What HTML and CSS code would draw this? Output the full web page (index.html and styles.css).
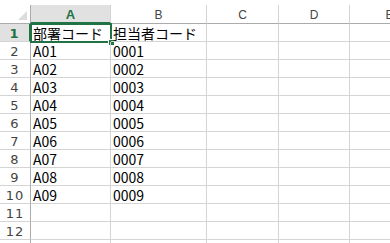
FILE: index.html
```html
<!DOCTYPE html>
<html lang="ja">
<head>
    <meta charset="UTF-8">
    <title>Sheet1</title>
    <link rel="stylesheet" href="styles.css">
</head>
<body>

<div class="sheet">
    <div class="top-strip"></div>

    <div class="hd corner">
        <svg width="9" height="9" viewBox="0 0 9 9"><polygon points="9,0 9,9 0,9" fill="#dcdcdc"/></svg>
    </div>
    <div class="hd col active">A</div>
    <div class="hd col">B</div>
    <div class="hd col">C</div>
    <div class="hd col">D</div>
    <div class="hd col">E</div>

    <div class="rh active">1</div>
    <div class="cell selected">部署コード<span class="sel-box"><span class="handle"></span></span></div>
    <div class="cell">担当者コード</div>
    <div class="cell"></div><div class="cell"></div><div class="cell"></div>

    <div class="rh">2</div><div class="cell">A01</div><div class="cell">0001</div>
    <div class="cell"></div><div class="cell"></div><div class="cell"></div>

    <div class="rh">3</div><div class="cell">A02</div><div class="cell">0002</div>
    <div class="cell"></div><div class="cell"></div><div class="cell"></div>

    <div class="rh">4</div><div class="cell">A03</div><div class="cell">0003</div>
    <div class="cell"></div><div class="cell"></div><div class="cell"></div>

    <div class="rh">5</div><div class="cell">A04</div><div class="cell">0004</div>
    <div class="cell"></div><div class="cell"></div><div class="cell"></div>

    <div class="rh">6</div><div class="cell">A05</div><div class="cell">0005</div>
    <div class="cell"></div><div class="cell"></div><div class="cell"></div>

    <div class="rh">7</div><div class="cell">A06</div><div class="cell">0006</div>
    <div class="cell"></div><div class="cell"></div><div class="cell"></div>

    <div class="rh">8</div><div class="cell">A07</div><div class="cell">0007</div>
    <div class="cell"></div><div class="cell"></div><div class="cell"></div>

    <div class="rh">9</div><div class="cell">A08</div><div class="cell">0008</div>
    <div class="cell"></div><div class="cell"></div><div class="cell"></div>

    <div class="rh">10</div><div class="cell">A09</div><div class="cell">0009</div>
    <div class="cell"></div><div class="cell"></div><div class="cell"></div>

    <div class="rh">11</div><div class="cell"></div><div class="cell"></div>
    <div class="cell"></div><div class="cell"></div><div class="cell"></div>

    <div class="rh">12</div><div class="cell"></div><div class="cell"></div>
    <div class="cell"></div><div class="cell"></div><div class="cell"></div>

    <div class="rh"></div><div class="cell"></div><div class="cell"></div>
    <div class="cell"></div><div class="cell"></div><div class="cell"></div>
</div>

</body>
</html>
```

FILE: styles.css
```css
html, body {
    margin: 0;
    padding: 0;
    background: #fff;
    overflow: hidden;
}
.sheet {
    display: grid;
    grid-template-columns: 31px 80px 96px 72px 71px 80px;
    grid-template-rows: 5px 19px repeat(13, 18px);
    width: 390px;
    height: 243px;
    overflow: hidden;
}
.top-strip {
    grid-column: 1 / -1;
    background: #fff;
}
.hd {
    box-sizing: border-box;
    border-bottom: 1px solid #ababab;
    background: #fff;
    color: #444;
    font-family: "Liberation Sans", Arial, sans-serif;
    font-size: 12px;
}
.col {
    display: flex;
    align-items: center;
    justify-content: center;
    border-right: 1px solid #d4d4d4;
    padding-top: 1px;
}
.col.active {
    background: #e1e1e1;
    color: #217346;
    font-weight: bold;
    font-size: 13px;
    border-bottom: 2px solid #217346;
    padding-top: 2px;
}
.corner {
    display: flex;
    align-items: flex-end;
    justify-content: flex-end;
    padding: 0 3px 3px 0;
    border-right: 1px solid #ababab;
}
.corner svg {
    display: block;
}
.rh {
    box-sizing: border-box;
    display: flex;
    align-items: flex-end;
    justify-content: center;
    padding-bottom: 1px;
    border-right: 1px solid #ababab;
    border-bottom: 1px solid #d4d4d4;
    color: #444;
    font-family: "DejaVu Sans", sans-serif;
    font-size: 13px;
    line-height: 1;
    letter-spacing: 1px;
}
.rh.active {
    background: #e1e1e1;
    color: #217346;
    font-weight: bold;
    border-right: 2px solid #217346;
}
.cell {
    box-sizing: border-box;
    position: relative;
    display: flex;
    align-items: flex-end;
    padding: 0 0 0 2px;
    border-right: 1px solid #d4d4d4;
    border-bottom: 1px solid #d4d4d4;
    color: #000;
    font-family: "Noto Sans CJK JP", sans-serif;
    font-size: 14px;
    line-height: 16px;
    white-space: nowrap;
}
.sel-box {
    position: absolute;
    left: -1px;
    top: -1px;
    right: -2px;
    bottom: -2px;
    border: 2px solid #217346;
}
.handle {
    position: absolute;
    right: -5px;
    bottom: -5px;
    width: 5px;
    height: 5px;
    background: #217346;
    border: 1px solid #fff;
}
```
